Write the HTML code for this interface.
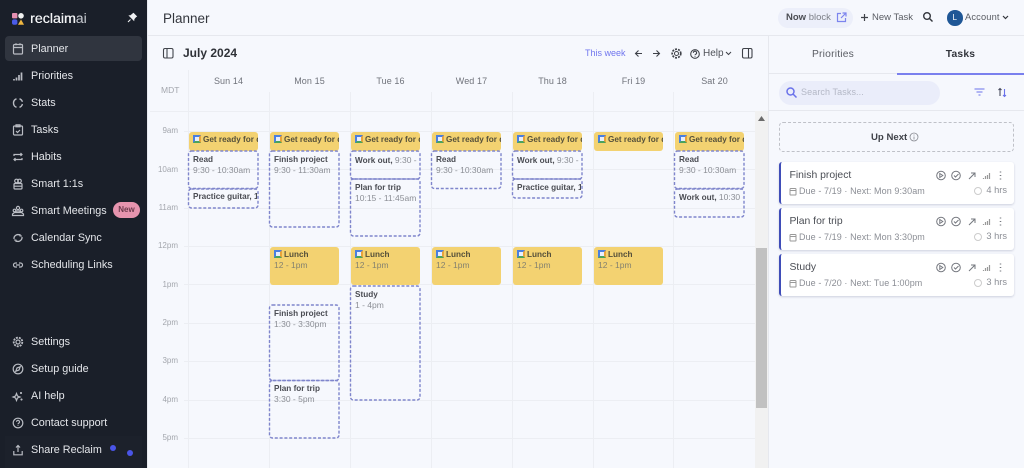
<!DOCTYPE html>
<html><head><meta charset="utf-8"><style>
*{box-sizing:border-box}
html,body{margin:0;padding:0;width:1024px;height:468px;overflow:hidden;background:#f6f8fd;font-family:"Liberation Sans",sans-serif;color:#3a3d45}
.a{position:absolute}
#side{left:0;top:0;width:147px;height:468px;background:#1a1f29}
.n{position:absolute;left:31px;font-size:10.8px;color:#e4e6ea;line-height:14px;white-space:nowrap}
.i{position:absolute;left:11px;width:14px;height:14px;fill:none;stroke:#b9bcc3;stroke-width:1.2}
.hl{position:absolute;left:184px;width:571px;height:1px;background:#eceef3}
.vl{position:absolute;top:92px;width:1px;height:376px;background:#eceef3}
.t{position:absolute;width:28px;left:150px;text-align:right;font-size:8px;color:#a3a6ad;line-height:10px}
.d{position:absolute;top:75px;width:81px;text-align:center;font-size:9px;color:#70737b;line-height:12px;letter-spacing:.1px}
.e{position:absolute;overflow:hidden;white-space:nowrap;font-size:8.2px;line-height:10.3px;border-radius:3px}
.y{background:#f3d271;height:18.5px;width:69px;padding:2.5px 0 0 14px;font-weight:bold;color:#55503a}
.y.l{height:37.5px}
.y span,.x span{font-weight:normal;font-size:8.5px}
.y span{display:block;margin:0 0 0 -10px;color:#85826f}
.y i{position:absolute;left:4px;top:3px;width:7.5px;height:7.5px;background:#e8eefc;border:2px solid;border-color:#4a7fe0 #e9a33a #4aa35c #4a7fe0}
.x{width:69px;padding:4px 0 0 5px;font-weight:bold;color:#4a4c53}
.x span{color:#8b8e95;display:block}
.x u{text-decoration:none;font-weight:normal;font-size:8.5px;color:#8b8e95}
.card{position:absolute;left:779px;width:235px;height:41.5px;background:#fff;border-left:2.5px solid #3f4db8;border-radius:3px;box-shadow:0 1px 2px rgba(60,70,110,.22)}
.card .h{position:absolute;left:8.5px;top:7px;font-size:10.4px;color:#4b4e55;line-height:13px}
.card .s{position:absolute;left:18px;top:23px;font-size:9px;color:#8b8e95;letter-spacing:.08px;line-height:12px;white-space:nowrap}
.card .hr{position:absolute;right:7px;top:22px;font-size:9.3px;color:#8b8e95;line-height:12px}
.card svg{position:absolute;left:0;top:0;width:235px;height:41px;fill:none;stroke:#75787f;stroke-width:1}
</style></head><body>

<div id="side" class="a">
<svg class="a" style="left:12px;top:13px;width:12px;height:12px"><rect x="0" y="0" width="5.4" height="5.4" rx="1" fill="#e58fb0"/><circle cx="9" cy="2.8" r="2.8" fill="#f1f1f1"/><rect x="0" y="6.4" width="5.4" height="5.4" rx="2" fill="#4a5be8"/><path d="M9 6.4l3 5.4H6z" fill="#f0b740"/></svg>
<div class="a" style="left:30px;top:10px;font-size:14.2px;line-height:18px;color:#f2f3f5;text-shadow:.3px 0 0 #f2f3f5">reclaim<span style="color:#c9ccd2;text-shadow:none">ai</span></div>
<svg class="a" style="left:127px;top:12px;width:11px;height:11px" fill="#f0f1f3"><path d="M6.5 .8l3.700 3.700-1.100.6-1.700 2-.2 2.100L1.400 3.400l2.100-.2 2-1.700z"/><path d="M3.500 7.500L1 10" stroke="#f0f1f3" stroke-width="1.100"/></svg>
<div class="a" style="left:5px;top:36px;width:137px;height:25px;background:#30353f;border-radius:4px"></div>

<svg class="i" style="top:42px" viewBox="0 0 14 14"><rect x="2.5" y="2.5" width="9" height="9.5" rx="1"/><path d="M2.500 5.500h9M5 1.300v2M9 1.300v2"/></svg>
<div class="n" style="top:42px">Planner</div>
<svg class="i" style="top:69px" viewBox="0 0 14 14"><path d="M3 11.500v-1.500M5.500 11.500V8.500M8 11.500V6M10.500 11.500V3.500" stroke-width="1.700"/></svg>
<div class="n" style="top:69px">Priorities</div>
<svg class="i" style="top:96px" viewBox="0 0 14 14"><path d="M8.500 2.800a4.500 4.500 0 0 1 2.900 3M11.400 8a4.500 4.500 0 0 1-2.900 3.300M5.500 11.300A4.500 4.500 0 0 1 2.500 7a4.500 4.500 0 0 1 3-4.200" stroke-width="1.400"/></svg>
<div class="n" style="top:96px">Stats</div>
<svg class="i" style="top:123px" viewBox="0 0 14 14"><rect x="2.5" y="3" width="9" height="9" rx="1"/><path d="M5 1.800h4v2H5zM5 8l1.500 1.500L9 7"/></svg>
<div class="n" style="top:123px">Tasks</div>
<svg class="i" style="top:150px" viewBox="0 0 14 14"><path d="M3 6V4.500h8M9.500 3l1.500 1.500L9.500 6M11 8v1.500H3M4.500 8L3 9.500 4.500 11"/></svg>
<div class="n" style="top:150px">Habits</div>
<svg class="i" style="top:177px" viewBox="0 0 14 14"><circle cx="5.500" cy="4" r="1.800"/><circle cx="8.500" cy="4" r="1.800"/><rect x="3" y="6.500" width="8" height="5.500" rx="1"/><path d="M3 9.200h8"/></svg>
<div class="n" style="top:177px">Smart 1:1s</div>
<svg class="i" style="top:204px" viewBox="0 0 14 14"><circle cx="7" cy="4" r="1.600"/><circle cx="3.500" cy="6.500" r="1.300"/><circle cx="10.500" cy="6.500" r="1.300"/><path d="M1.500 11.500V10l2-1.500h7l2 1.500v1.500zM5 8.500V7h4v1.500"/></svg>
<div class="n" style="top:204px">Smart Meetings</div>
<div class="a" style="left:113px;top:202px;width:27px;height:16px;border-radius:8px;background:#e694ae;color:#6d3a4c;font-size:8px;text-align:center;line-height:15px;font-weight:bold">New</div>
<svg class="i" style="top:231px" viewBox="0 0 14 14"><path d="M3 8a4 4 0 0 1 6.500-3.500M11 6a4 4 0 0 1-6.500 3.500" stroke-width="1.300"/><path d="M9 3v2h2M5 11V9H3" stroke-width="1"/></svg>
<div class="n" style="top:231px">Calendar Sync</div>
<svg class="i" style="top:258px" viewBox="0 0 14 14"><path d="M6 5H4.500a2 2 0 0 0 0 4H6M8 5h1.500a2 2 0 0 1 0 4H8M5 7h4"/></svg>
<div class="n" style="top:258px">Scheduling Links</div>

<svg class="i" style="top:335px" viewBox="0 0 14 14"><circle cx="7" cy="7" r="2"/><circle cx="7" cy="7" r="4.300" stroke-width="1.800" stroke-dasharray="2 1"/></svg>
<div class="n" style="top:335px">Settings</div>
<svg class="i" style="top:362px" viewBox="0 0 14 14"><circle cx="7" cy="7" r="4.800"/><path d="M9.200 4.800L8 8 4.800 9.200 6 6z"/></svg>
<div class="n" style="top:362px">Setup guide</div>
<svg class="i" style="top:389px" viewBox="0 0 14 14"><path d="M5.500 4.500l1 2.500 2.500 1-2.500 1-1 2.500-1-2.500L2 8l2.500-1z"/><path d="M10 3v2M9 4h2M10.500 9.500v2M9.500 10.500h2"/></svg>
<div class="n" style="top:389px">AI help</div>
<svg class="i" style="top:416px" viewBox="0 0 14 14"><circle cx="7" cy="7" r="4.800"/><path d="M5.500 5.800a1.500 1.500 0 1 1 2.300 1.300c-.6.400-.8.700-.8 1.200M7 9.400v.6"/></svg>
<div class="n" style="top:416px">Contact support</div>
<div class="a" style="left:5px;top:436px;width:137px;height:32px;background:#1c212b"></div>
<svg class="i" style="top:443px" viewBox="0 0 14 14"><path d="M2.800 8v3.800h8.400V8M7 9V2.500M5 4.500l2-2 2 2"/></svg>
<div class="n" style="top:443px">Share Reclaim</div>
<div class="a" style="left:110px;top:445px;width:6px;height:6px;border-radius:50%;background:#4a55e8"></div>
<div class="a" style="left:127px;top:450px;width:6px;height:6px;border-radius:50%;background:#4a55e8"></div>
</div>
<div class="a" style="left:147px;top:0;width:1px;height:468px;background:#e8eaef"></div>

<!-- header -->
<div class="a" style="left:163px;top:10px;font-size:13.5px;line-height:17px;color:#33363d">Planner</div>
<div class="a" style="left:148px;top:35px;width:876px;height:1px;background:#e6e8ee"></div>
<div class="a" style="left:778px;top:8px;width:75px;height:20px;border-radius:10px;background:#eceffa"></div>
<div class="a" style="left:786px;top:11px;font-size:9.5px;line-height:13px;color:#4a4c53;white-space:nowrap"><b>Now</b> <span style="color:#7d8088">block</span></div>
<svg class="a" style="left:835px;top:11px;width:13px;height:13px;fill:none;stroke:#7c84ee;stroke-width:1.2" viewBox="0 0 13 13"><path d="M6 2.500H2.500v8h8V7M6 7l4.500-4.500M7.500 2h3.500v3.500"/></svg>
<svg class="a" style="left:860px;top:13px;width:9px;height:9px;fill:none;stroke:#3f4249;stroke-width:1.2" viewBox="0 0 9 9"><path d="M4.500 1v7M1 4.500h7"/></svg>
<div class="a" style="left:872px;top:11px;font-size:9.5px;line-height:13px;color:#5a5d64">New Task</div>
<svg class="a" style="left:922px;top:11px;width:12px;height:12px;fill:none;stroke:#33363d;stroke-width:1.4" viewBox="0 0 12 12"><circle cx="5" cy="5" r="3.300"/><path d="M7.500 7.500l3 3"/></svg>
<div class="a" style="left:947px;top:10px;width:15.5px;height:15.5px;border-radius:50%;background:#1f5796;color:#fff;font-size:8px;line-height:15.5px;text-align:center">L</div>
<div class="a" style="left:965px;top:11px;font-size:9.3px;line-height:13px;color:#5a5d64;letter-spacing:.15px">Account</div>
<svg class="a" style="left:1002px;top:14px;width:7px;height:7px;fill:none;stroke:#33363d;stroke-width:1.2" viewBox="0 0 7 7"><path d="M1 2l2.500 2.500L6 2"/></svg>

<!-- toolbar -->
<svg class="a" style="left:162px;top:47px;width:13px;height:13px;fill:none;stroke:#42454c;stroke-width:1.1" viewBox="0 0 13 13"><rect x="1.500" y="1.500" width="9.500" height="9.500" rx="1.500"/><path d="M5 1.500v9.500"/></svg>
<div class="a" style="left:183px;top:45px;font-size:12px;line-height:16px;font-weight:bold;color:#2f3238">July 2024</div>
<div class="a" style="left:585px;top:47px;font-size:9px;line-height:12px;color:#7076ee">This week</div>
<svg class="a" style="left:634px;top:48px;width:34px;height:11px;fill:none;stroke:#3e4148;stroke-width:1.1" viewBox="0 0 34 11"><path d="M8 5.500H1.500M4.500 2.500l-3 3 3 3M19 5.500h6.500M22.500 2.500l3 3-3 3"/></svg>
<svg class="a" style="left:670px;top:47px;width:13px;height:13px;fill:none;stroke:#3e4148" viewBox="0 0 13 13"><circle cx="6.500" cy="6.500" r="2"/><circle cx="6.500" cy="6.500" r="4.300" stroke-width="1.700" stroke-dasharray="2 1.100"/></svg>
<svg class="a" style="left:688px;top:47px;width:14px;height:14px;fill:none;stroke:#3e4148;stroke-width:1" viewBox="0 0 13 13"><circle cx="6.500" cy="6.500" r="4"/><path d="M5 5.400a1.500 1.500 0 1 1 2.200 1.300c-.5.300-.7.600-.7 1M6.500 8.700v.6"/></svg>
<div class="a" style="left:703px;top:47px;font-size:10px;line-height:13px;color:#4f5259">Help</div>
<svg class="a" style="left:725px;top:50px;width:7px;height:7px;fill:none;stroke:#3e4148;stroke-width:1" viewBox="0 0 7 7"><path d="M1 2l2.500 2.500L6 2"/></svg>
<svg class="a" style="left:741px;top:47px;width:13px;height:13px;fill:none;stroke:#3e4148;stroke-width:1.1" viewBox="0 0 13 13"><rect x="1.500" y="1.500" width="9.500" height="9.500" rx="1.500"/><path d="M7.500 1.500v9.500"/></svg>

<!-- grid -->
<div class="d" style="left:188px">Sun 14</div><div class="d" style="left:269px">Mon 15</div><div class="d" style="left:350px">Tue 16</div><div class="d" style="left:431px">Wed 17</div><div class="d" style="left:512px">Thu 18</div><div class="d" style="left:593px">Fri 19</div><div class="d" style="left:674px">Sat 20</div>
<div class="a" style="left:161px;top:85px;font-size:8.5px;line-height:11px;color:#a3a6ad">MDT</div>
<div class="vl" style="left:188px;top:70px;height:398px"></div><div class="vl" style="left:269px"></div><div class="vl" style="left:350px"></div><div class="vl" style="left:431px"></div><div class="vl" style="left:512px"></div><div class="vl" style="left:593px"></div><div class="vl" style="left:673px"></div>
<div class="hl" style="top:111px;left:150px;width:605px"></div>
<div class="hl" style="top:131px"></div><div class="hl" style="top:169px"></div><div class="hl" style="top:208px"></div><div class="hl" style="top:246px"></div><div class="hl" style="top:284px"></div><div class="hl" style="top:323px"></div><div class="hl" style="top:361px"></div><div class="hl" style="top:400px"></div><div class="hl" style="top:438px"></div>
<div class="t" style="top:126px">9am</div><div class="t" style="top:165px">10am</div><div class="t" style="top:203px">11am</div><div class="t" style="top:241px">12pm</div><div class="t" style="top:280px">1pm</div><div class="t" style="top:318px">2pm</div><div class="t" style="top:356px">3pm</div><div class="t" style="top:395px">4pm</div><div class="t" style="top:433px">5pm</div>

<div class="a" style="left:755px;top:111px;width:13px;height:357px;background:#f1f1f1"></div>
<div class="a" style="left:756px;top:248px;width:11px;height:160px;background:#c1c1c1"></div>
<svg class="a" style="left:758px;top:116px;width:7px;height:5px"><path d="M3.500 0L7 5H0z" fill="#6a6a6a"/></svg>
<div class="a" style="left:768px;top:36px;width:1px;height:432px;background:#e6e8ee"></div>

<!-- events -->
<div class="e y" style="left:189px;top:132px"><i></i>Get ready for day</div>
<div class="e y" style="left:270px;top:132px"><i></i>Get ready for day</div>
<div class="e y" style="left:351px;top:132px"><i></i>Get ready for day</div>
<div class="e y" style="left:432px;top:132px"><i></i>Get ready for day</div>
<div class="e y" style="left:513px;top:132px"><i></i>Get ready for day</div>
<div class="e y" style="left:594px;top:132px"><i></i>Get ready for day</div>
<div class="e y" style="left:675px;top:132px"><i></i>Get ready for day</div>

<div class="e y l" style="left:270px;top:247px"><i></i>Lunch<span>12 - 1pm</span></div>
<div class="e y l" style="left:351px;top:247px"><i></i>Lunch<span>12 - 1pm</span></div>
<div class="e y l" style="left:432px;top:247px"><i></i>Lunch<span>12 - 1pm</span></div>
<div class="e y l" style="left:513px;top:247px"><i></i>Lunch<span>12 - 1pm</span></div>
<div class="e y l" style="left:594px;top:247px"><i></i>Lunch<span>12 - 1pm</span></div>

<div class="e x" style="left:188px;top:151px;height:38px">Read<span>9:30 - 10:30am</span></div>
<div class="e x" style="left:188px;top:188px;height:20px">Practice guitar, 10:30</div>
<div class="e x" style="left:269px;top:151px;height:76px">Finish project<span>9:30 - 11:30am</span></div>
<div class="e x" style="left:350px;top:151px;height:28px">Work out, <u>9:30 - 10:15</u></div>
<div class="e x" style="left:350px;top:179px;height:58px">Plan for trip<span>10:15 - 11:45am</span></div>
<div class="e x" style="left:431px;top:151px;height:38px">Read<span>9:30 - 10:30am</span></div>
<div class="e x" style="left:512px;top:151px;height:28px">Work out, <u>9:30 - 10:15</u></div>
<div class="e x" style="left:512px;top:179px;height:20px">Practice guitar, 10:15</div>
<div class="e x" style="left:674px;top:151px;height:38px">Read<span>9:30 - 10:30am</span></div>
<div class="e x" style="left:674px;top:188px;height:30px">Work out, <u>10:30 - 11:15</u></div>
<div class="e x" style="left:269px;top:305px;height:75px">Finish project<span>1:30 - 3:30pm</span></div>
<div class="e x" style="left:269px;top:380px;height:59px">Plan for trip<span>3:30 - 5pm</span></div>
<div class="e x" style="left:350px;top:286px;height:114px">Study<span>1 - 4pm</span></div>

<svg class="a" style="left:0;top:0;width:1024px;height:468px;pointer-events:none" viewBox="0 0 1024 468" fill="none" stroke="#7f85cc" stroke-width="1.4" stroke-dasharray="3 1.800">
<rect x="188.5" y="151" width="69.5" height="37.5" rx="3"/>
<rect x="188.5" y="189" width="69.5" height="19" rx="3"/>
<rect x="269.5" y="151" width="69.5" height="76" rx="3"/>
<rect x="350.5" y="151" width="69.5" height="28" rx="3"/>
<rect x="350.5" y="179" width="69.5" height="57" rx="3"/>
<rect x="431.5" y="151" width="69.5" height="37.5" rx="3"/>
<rect x="512.5" y="151" width="69.5" height="28" rx="3"/>
<rect x="512.5" y="179" width="69.5" height="19" rx="3"/>
<rect x="674.5" y="151" width="69.5" height="37.5" rx="3"/>
<rect x="674.5" y="189" width="69.5" height="28" rx="3"/>
<rect x="269.5" y="305" width="69.5" height="75.5" rx="3"/>
<rect x="269.5" y="380.5" width="69.5" height="57.5" rx="3"/>
<rect x="350.5" y="286" width="69.5" height="114" rx="3"/>
</svg>

<!-- right panel -->
<div class="a" style="left:769px;top:48px;width:128px;text-align:center;font-size:10.3px;line-height:13px;color:#5a5d64;letter-spacing:.2px">Priorities</div>
<div class="a" style="left:897px;top:48px;width:127px;text-align:center;font-size:10.3px;line-height:13px;color:#33363d;letter-spacing:.2px;font-weight:bold">Tasks</div>
<div class="a" style="left:769px;top:73px;width:255px;height:1px;background:#e6e8ee"></div>
<div class="a" style="left:897px;top:73px;width:127px;height:2px;background:#7a80ee"></div>
<div class="a" style="left:779px;top:81px;width:161px;height:24px;border-radius:12px;background:#eaedfa"></div>
<svg class="a" style="left:785px;top:86px;width:13px;height:13px;fill:none;stroke:#6a72ea;stroke-width:1.5" viewBox="0 0 13 13"><circle cx="5.500" cy="5.500" r="3.500"/><path d="M8 8l3.500 3.500"/></svg>
<div class="a" style="left:801px;top:86px;font-size:9px;line-height:12px;color:#b4b8c6;letter-spacing:.1px">Search Tasks...</div>
<svg class="a" style="left:974px;top:87px;width:11px;height:10px;fill:none;stroke:#6a72ea;stroke-width:1.1" viewBox="0 0 11 10"><path d="M.5 2h10M2.500 5h6M4.500 8h2"/></svg>
<svg class="a" style="left:997px;top:87px;width:11px;height:11px;fill:none;stroke-width:1.1" viewBox="0 0 11 11"><path d="M3 9V1.500M1.500 3L3 1.500 4.500 3" stroke="#4a4d60"/><path d="M7.500 2v7.500M6 8l1.500 1.500L9 8" stroke="#6a72ea"/></svg>
<div class="a" style="left:769px;top:110px;width:255px;height:1px;background:#e6e8ee"></div>
<div class="a" style="left:779px;top:122px;width:235px;height:30px;border:1px dashed #bfc1c8;border-radius:4px"></div>
<div class="a" style="left:871px;top:131px;font-size:9.6px;line-height:13px;font-weight:bold;color:#3f4249">Up Next</div>
<svg class="a" style="left:909px;top:132px;width:10px;height:10px;fill:none;stroke:#85888f;stroke-width:.8" viewBox="0 0 10 10"><circle cx="5" cy="5" r="4"/><path d="M5 4.500V7.500M5 2.500v1"/></svg>

<div class="card" style="top:162px"><div class="h">Finish project</div><div class="s">Due - 7/19 · Next: Mon 9:30am</div><div class="hr">4 hrs</div>
<svg viewBox="0 0 235 41"><rect x="9" y="26.500" width="6" height="6.500" rx=".8" stroke="#999"/><path d="M9 28.500h6" stroke="#999"/><circle cx="160" cy="13.500" r="4.300"/><path d="M158.800 11.500l3 2-3 2z"/><circle cx="175" cy="13.500" r="4.300"/><path d="M173 13.500l1.500 1.500 3-3"/><path d="M188 17l6-6M190 11h4v4"/><path d="M202.500 17v-1M204.500 17v-3M206.500 17v-4M208.500 17v-6" stroke="#999" stroke-width="1.2"/><path d="M219.500 9.500v1M219.500 13v1M219.500 16.500v1" stroke-width="1.5"/><circle cx="197" cy="29" r="3.500" stroke="#ccc"/></svg></div>
<div class="card" style="top:208px"><div class="h">Plan for trip</div><div class="s">Due - 7/19 · Next: Mon 3:30pm</div><div class="hr">3 hrs</div>
<svg viewBox="0 0 235 41"><rect x="9" y="26.500" width="6" height="6.500" rx=".8" stroke="#999"/><path d="M9 28.500h6" stroke="#999"/><circle cx="160" cy="13.500" r="4.300"/><path d="M158.800 11.500l3 2-3 2z"/><circle cx="175" cy="13.500" r="4.300"/><path d="M173 13.500l1.500 1.500 3-3"/><path d="M188 17l6-6M190 11h4v4"/><path d="M202.500 17v-1M204.500 17v-3M206.500 17v-4M208.500 17v-6" stroke="#999" stroke-width="1.2"/><path d="M219.500 9.500v1M219.500 13v1M219.500 16.500v1" stroke-width="1.5"/><circle cx="197" cy="29" r="3.500" stroke="#ccc"/></svg></div>
<div class="card" style="top:254px"><div class="h">Study</div><div class="s">Due - 7/20 · Next: Tue 1:00pm</div><div class="hr">3 hrs</div>
<svg viewBox="0 0 235 41"><rect x="9" y="26.500" width="6" height="6.500" rx=".8" stroke="#999"/><path d="M9 28.500h6" stroke="#999"/><circle cx="160" cy="13.500" r="4.300"/><path d="M158.800 11.500l3 2-3 2z"/><circle cx="175" cy="13.500" r="4.300"/><path d="M173 13.500l1.500 1.500 3-3"/><path d="M188 17l6-6M190 11h4v4"/><path d="M202.500 17v-1M204.500 17v-3M206.500 17v-4M208.500 17v-6" stroke="#999" stroke-width="1.2"/><path d="M219.500 9.500v1M219.500 13v1M219.500 16.500v1" stroke-width="1.5"/><circle cx="197" cy="29" r="3.500" stroke="#ccc"/></svg></div>

</body></html>
